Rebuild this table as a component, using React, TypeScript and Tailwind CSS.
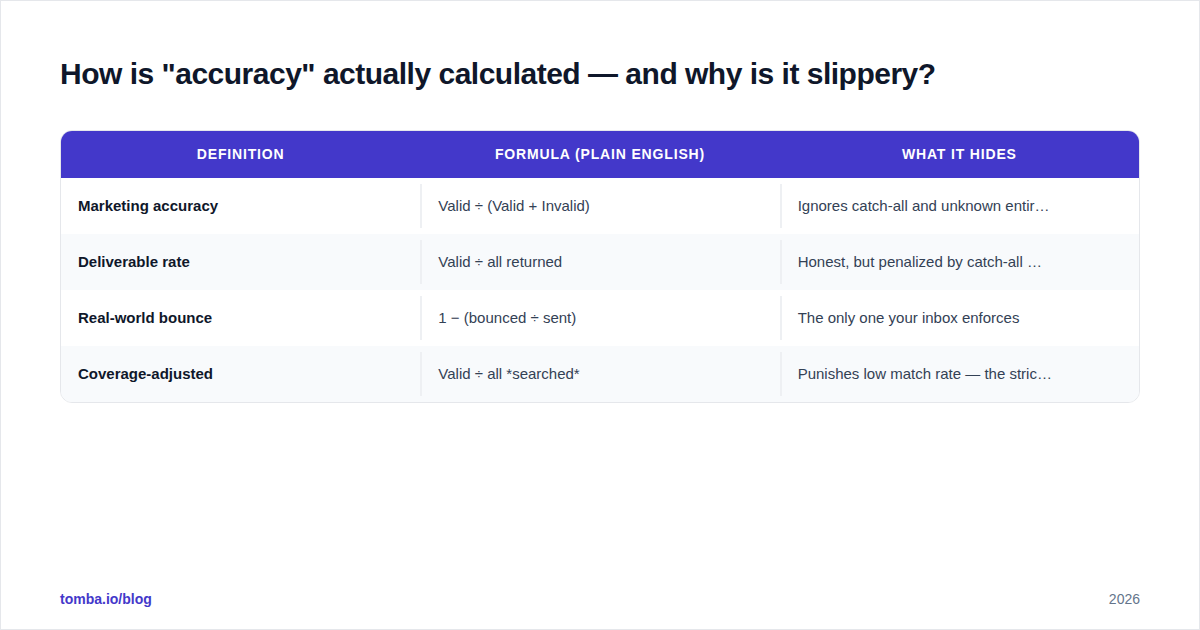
const ROWS = [
  { name: "Marketing accuracy", formula: "Valid ÷ (Valid + Invalid)", hides: "Ignores catch-all and unknown entir…" },
  { name: "Deliverable rate", formula: "Valid ÷ all returned", hides: "Honest, but penalized by catch-all …" },
  { name: "Real-world bounce", formula: "1 − (bounced ÷ sent)", hides: "The only one your inbox enforces" },
  { name: "Coverage-adjusted", formula: "Valid ÷ all *searched*", hides: "Punishes low match rate — the stric…" },
]

const HEADERS = ["Definition", "Formula (plain English)", "What it hides"]

export default function App() {
  return (
    <div
      className="flex h-[630px] w-[1200px] flex-col border border-[#e5e7eb] bg-white px-[59px] pt-[55px] pb-[20px]"
      style={{ fontFamily: '"Liberation Sans", Arial, sans-serif' }}
    >
      <h1 className="text-[30px] font-bold leading-[36px] tracking-[-0.5px] text-[#0f172a]">
        How is "accuracy" actually calculated — and why is it slippery?
      </h1>

      {/* table */}
      <div className="mt-[38px] overflow-hidden rounded-xl border border-[#e5e7eb]">
        <div className="grid h-[47px] grid-cols-3 bg-[#4338ca]">
          {HEADERS.map((h) => (
            <div
              key={h}
              className="flex items-center justify-center text-[14px] font-bold uppercase tracking-[0.06em] text-white"
            >
              {h}
            </div>
          ))}
        </div>
        {ROWS.map((r, i) => (
          <div key={r.name} className={i % 2 ? "grid h-[56px] grid-cols-3 bg-[#f8fafc]" : "grid h-[56px] grid-cols-3 bg-white"}>
            <div className="my-[6px] flex items-center px-[17px] text-[15px] font-bold text-[#0f172a]">{r.name}</div>
            <div className="my-[6px] flex items-center border-l-2 border-[#eef0f3] px-[16px] text-[15px] text-[#334155]">
              {r.formula}
            </div>
            <div className="my-[6px] flex items-center border-l-2 border-[#eef0f3] px-[16px] text-[15px] text-[#334155]">
              {r.hides}
            </div>
          </div>
        ))}
      </div>

      <div className="mt-auto flex items-center justify-between text-[14px] leading-[20px]">
        <span className="font-bold text-[#4338ca]">tomba.io/blog</span>
        <span className="text-[#64748b]">2026</span>
      </div>
    </div>
  )
}
